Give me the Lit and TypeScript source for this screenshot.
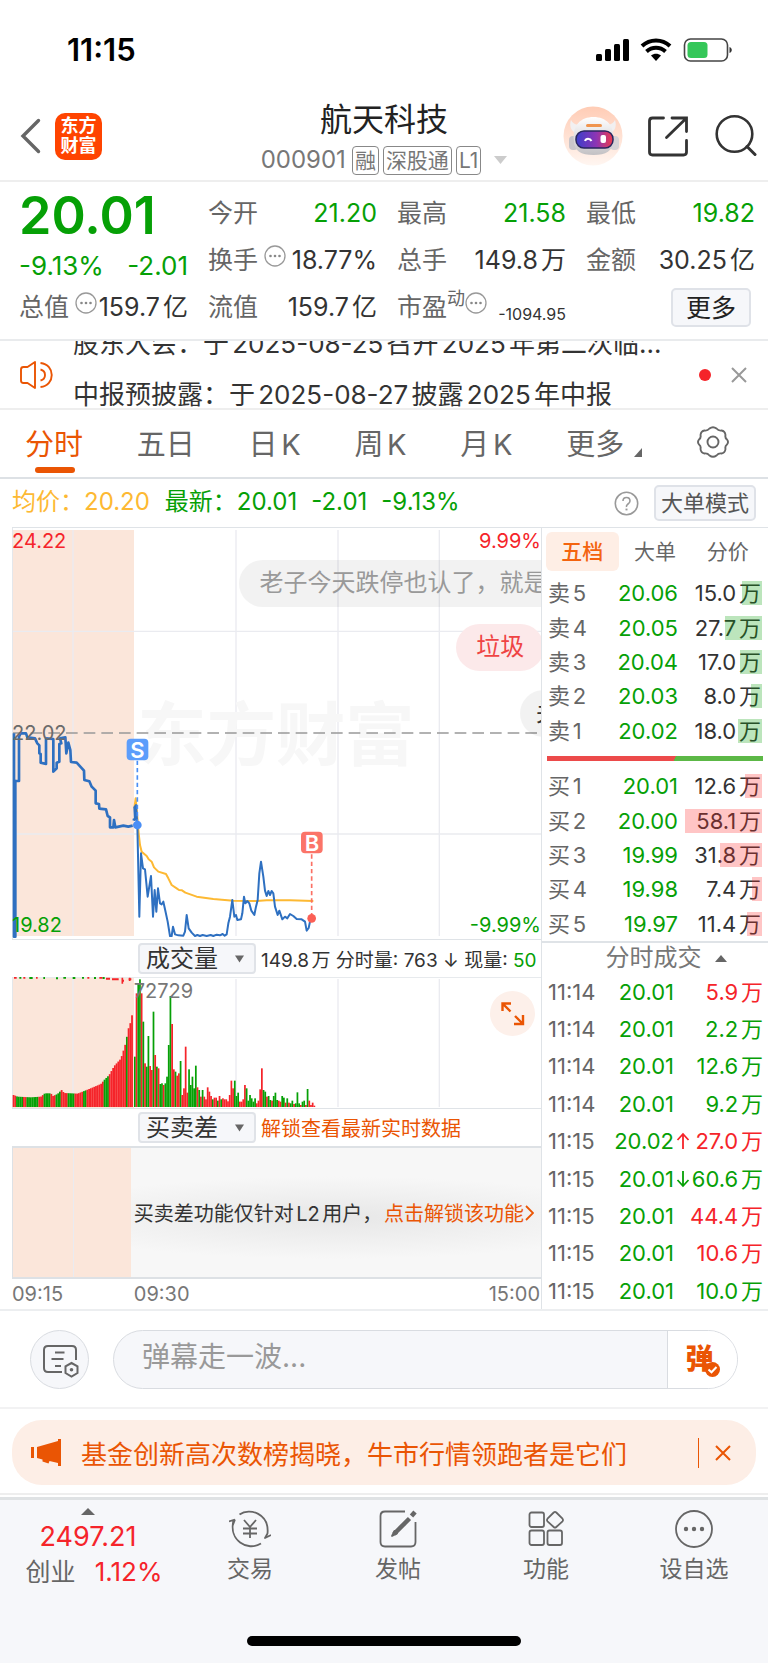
import { LitElement, html, svg, css, nothing } from "lit";
import { customElement } from "lit/decorators.js";
import { classMap } from "lit/directives/class-map.js";

type Tone = "up" | "down" | "plain";

const ASKS: [string, string, number][] = [
  ["卖5", "20.06", 15.0],
  ["卖4", "20.05", 27.7],
  ["卖3", "20.04", 17.0],
  ["卖2", "20.03", 8.0],
  ["卖1", "20.02", 18.0],
];
const BIDS: [string, string, number][] = [
  ["买1", "20.01", 12.6],
  ["买2", "20.00", 58.1],
  ["买3", "19.99", 31.8],
  ["买4", "19.98", 7.4],
  ["买5", "19.97", 11.4],
];
const DEPTH_MAX = 58.1;

const TRADES: { time: string; price: string; move?: Tone; qty: string; tone: Tone }[] = [
  { time: "11:14", price: "20.01", qty: "5.9", tone: "up" },
  { time: "11:14", price: "20.01", qty: "2.2", tone: "down" },
  { time: "11:14", price: "20.01", qty: "12.6", tone: "down" },
  { time: "11:14", price: "20.01", qty: "9.2", tone: "down" },
  { time: "11:15", price: "20.02", move: "up", qty: "27.0", tone: "up" },
  { time: "11:15", price: "20.01", move: "down", qty: "60.6", tone: "down" },
  { time: "11:15", price: "20.01", qty: "44.4", tone: "up" },
  { time: "11:15", price: "20.01", qty: "10.6", tone: "up" },
  { time: "11:15", price: "20.01", qty: "10.0", tone: "down" },
];

const AUCTION_LINE =
  "42,640 42,1250 46,1250 46,783 57,783 57,650 62,640 78,640 82,652 105,655 112,670 118,676 118,700 122,702 122,728 138,732 138,655 160,657 160,755 170,745 170,728 178,725 178,672 184,670 180,655 196,652 199,700 205,668 211,690 213,726 230,728 243,742 252,752 253,780 268,784 275,800 287,812 287,850 297,852 298,866 318,868 323,888 330,892 330,922 340,922 342,900 346,922 370,917 385,920 398,917";
const PRICE_LINE =
  "398,898 405,900 403,862 408,855 412,915 418,1190 423,1000 429,1045 435,1048 443,1130 453,1068 459,1190 464,1110 469,1175 474,1105 480,1150 485,1153 490,1145 496,1172 503,1205 510,1248 515,1248 519,1220 525,1243 535,1246 550,1247 555,1235 560,1185 566,1225 575,1238 585,1248 592,1245 600,1248 608,1245 620,1248 632,1245 640,1248 650,1244 660,1246 668,1242 674,1247 680,1243 685,1210 690,1190 697,1140 703,1190 708,1185 712,1200 723,1198 727,1180 732,1130 736,1150 742,1143 748,1150 754,1172 763,1185 768,1160 773,1140 778,1060 783,1025 790,1070 795,1112 800,1128 805,1113 810,1125 815,1113 820,1120 825,1160 833,1185 838,1172 847,1198 855,1190 862,1195 870,1182 880,1188 890,1197 905,1198 915,1205 920,1232 926,1224 930,1205 935,1195";
const AVERAGE_LINE =
  "403,865 407,835 411,880 416,940 420,975 425,995 440,1008 446,1018 455,1025 462,1042 475,1055 498,1062 505,1075 515,1095 530,1105 537,1110 546,1111 556,1118 590,1130 640,1137 700,1142 770,1143 800,1141 870,1141 940,1143";

const AUCTION_ENVELOPE: [number, number][] = [
  [38, 495], [50, 500], [90, 502], [120, 500], [132, 490], [150, 490], [156, 498], [170, 492], [182, 480],
  [190, 489], [230, 491], [260, 479], [300, 462], [310, 450], [325, 435], [340, 408], [360, 386], [372, 348],
  [378, 320], [384, 290], [390, 275], [397, 235],
];
const AUCTION_TONES = "rrggggrrgggggggrrrggggrrrgggrrrrggggrrrrrggrrrrrrrrrrgggrrrrrrrrrrgrrr";

const SESSION_BARS =
  "380g 190r 160g 148g 190r 275g 400r 410g 318g 408r 420r 245g 375r 410g 415r 462g 460g 465r 460g 440g 345g 198g 282r 418r 425g 437r 430r 393g 495r 475r 350r 488r 418g 465g 440g 475g 407g 472r 480g 500r 480g 500r 508r 472r 485r 498r 508g 503r 503r 512g 498r 508g 505r 508r 508r 514r 495r 452r 475r 452g 498g 488g 515r 515r 508r 465r 475g 512g 495g 505g 515g 505g 520r 512r 478r 415r 480g 485g 500r 498g 510g 512r 498g 488g 510g 512r 515r 498g 503g 518r 505g 518r 520g 512g 522r 520g 487g 520g 525r 515g 512g 525r 477g 512r 525r 518r 527r".split(" ");

const RED = "#f5242a";
const GREEN = "#06a006";

const envelopeAt = (x: number) => {
  for (let i = 1; i < AUCTION_ENVELOPE.length; i++) {
    const [x0, y0] = AUCTION_ENVELOPE[i - 1];
    const [x1, y1] = AUCTION_ENVELOPE[i];
    if (x <= x1) return y0 + ((y1 - y0) * (x - x0)) / (x1 - x0);
  }
  return 235;
};

const closeIcon = svg`<path d="M2 2L16 16M16 2L2 16" fill="none" stroke="currentColor" stroke-width="2" />`;

@customElement("quote-stats")
export class QuoteStats extends LitElement {
  static styles = css`
    :host {
      display: block;
      border-bottom: 2px solid #e9ebed;
      padding: 8px 13px 8px 19px;
      font-size: 25px;
      line-height: 47px;
    }
    .grid {
      display: grid;
      grid-template-columns: repeat(4, minmax(0, 1fr));
      column-gap: 20px;
    }
    .cell {
      display: flex;
      justify-content: space-between;
      white-space: nowrap;
      color: #333;
    }
    .label {
      display: flex;
      align-items: center;
      color: #666;
    }
    .down {
      color: #06a006;
    }
    .lead {
      grid-row: span 2;
      color: #06a006;
    }
    .price {
      font-size: 52px;
      font-weight: 600;
      line-height: 52px;
    }
    .change {
      display: flex;
      justify-content: space-between;
      font-size: 26px;
      line-height: 36px;
      padding-top: 6px;
    }
    .info {
      width: 22px;
      height: 22px;
      align-self: flex-start;
      margin: 8px 0 0 6px;
    }
    .tight {
      margin-left: 0;
    }
    .sup {
      font-size: 18px;
      line-height: 30px;
      align-self: flex-start;
    }
    .small {
      font-size: 16px;
      line-height: 34px;
      align-self: flex-end;
    }
    .more {
      justify-self: end;
      align-self: center;
      width: 80px;
      height: 39px;
      padding: 0;
      border: 2px solid #dfe2e8;
      border-radius: 5px;
      background: #f6f7fa;
      font: inherit;
      line-height: 34px;
      color: #222;
      margin-right: 4px;
    }
  `;

  private info(tight = false) {
    return html`<svg class=${classMap({ info: true, tight })} viewBox="0 0 22 22" aria-hidden="true">
      <circle cx="11" cy="11" r="10" fill="none" stroke="#999" stroke-width="1.3" />
      <circle cx="6.500" cy="11" r="1.3" fill="#888" />
      <circle cx="11" cy="11" r="1.3" fill="#888" />
      <circle cx="15.500" cy="11" r="1.3" fill="#888" />
    </svg>`;
  }

  render() {
    return html`<div class="grid">
      <div class="lead">
        <div class="price">20.01</div>
        <div class="change"><span>-9.13%</span><span>-2.01</span></div>
      </div>
      <div class="cell"><span class="label">今开</span><span class="down">21.20</span></div>
      <div class="cell"><span class="label">最高</span><span class="down">21.58</span></div>
      <div class="cell"><span class="label">最低</span><span class="down">19.82</span></div>
      <div class="cell"><span class="label">换手${this.info()}</span><span>18.77%</span></div>
      <div class="cell"><span class="label">总手</span><span>149.8万</span></div>
      <div class="cell"><span class="label">金额</span><span>30.25亿</span></div>
      <div class="cell"><span class="label">总值${this.info()}</span><span>159.7亿</span></div>
      <div class="cell"><span class="label">流值</span><span>159.7亿</span></div>
      <div class="cell">
        <span class="label">市盈<span class="sup">动</span>${this.info(true)}</span><span class="small">-1094.95</span>
      </div>
      <button class="more">更多</button>
    </div>`;
  }
}

@customElement("price-chart")
export class PriceChart extends LitElement {
  static styles = css`
    :host {
      display: block;
      position: relative;
      overflow: hidden;
      border-bottom: 1px solid #dfe3e7;
      font-size: 20px;
      line-height: 24px;
    }
    .plot {
      display: block;
      width: 100%;
    }
    .tag {
      position: absolute;
    }
    .top {
      top: 2px;
    }
    .mid {
      top: 50%;
      margin-top: -12px;
      color: #6b6b6b;
    }
    .low {
      bottom: 2px;
    }
    .left {
      left: 0;
    }
    .right {
      right: 0;
    }
    .up {
      color: #f5242a;
    }
    .down {
      color: #06a006;
    }
    .bullet {
      position: absolute;
      height: 47px;
      line-height: 46px;
      border-radius: 24px;
      padding: 0 20px;
      box-sizing: border-box;
      white-space: nowrap;
      font-size: 24px;
      color: #999;
      background: rgba(0, 0, 0, 0.05);
    }
    .first {
      left: 43%;
      top: 33px;
    }
    .second {
      left: 84%;
      top: 97px;
      color: #ef4444;
      background: #fce9ea;
    }
    .third {
      left: 96%;
      top: 163px;
      padding: 0 16px;
      color: #333;
    }
    .watermark {
      font: 700 65px "Noto Sans CJK SC", sans-serif;
    }
    .badge {
      font: 600 22px Inter, sans-serif;
    }
  `;

  render() {
    return html`<svg class="plot" viewBox="36 21 1587 1236" role="img" aria-label="分时走势">
        <rect x="39" y="30" width="363" height="1218" fill="#fbe6da" />
        <g stroke="#eaebf0" stroke-width="4">
          <path d="M219 30V1248M708 30V1248M1014 30V1248M1318 30V1248M39 334H1623M39 942H1623" />
        </g>
        <g transform="translate(412 720) scale(3.2)" fill="#f7f7f7"><text class="watermark" x="0" y="0">东方财富</text></g>
        <path d="M36 21H1623" stroke="#dfe3e7" stroke-width="6" />
        <path d="M37 21V1257" stroke="#dfe3e7" stroke-width="3" />
        <path d="M39 639H1623" stroke="#999" stroke-width="5" stroke-dasharray="35 18" />
        <g fill="none" stroke-linejoin="round">
          <polyline points=${AVERAGE_LINE} stroke="#fdb933" stroke-width="6" />
          <polyline points=${AUCTION_LINE} stroke="#2e70c1" stroke-width="8" />
          <polyline points=${PRICE_LINE} stroke="#2e70c1" stroke-width="6" />
          <path d="M412 722V905" stroke="#4a8ef5" stroke-width="5" stroke-dasharray="13 9" />
          <path d="M935 1003V1185" stroke="#fb7064" stroke-width="5" stroke-dasharray="13 9" />
        </g>
        <circle cx="412" cy="915" r="13" fill="#4a8ef5" />
        <circle cx="935" cy="1195" r="13" fill="#fb5f55" />
        <rect x="380" y="656" width="65" height="65" rx="12" fill="#5c9dfb" />
        <rect x="903" y="935" width="65" height="65" rx="12" fill="#fb7468" />
        <g fill="#fff" text-anchor="middle">
          <g transform="translate(412 713) scale(3)"><text class="badge" x="0" y="0">S</text></g>
          <g transform="translate(936 992) scale(3)"><text class="badge" x="0" y="0">B</text></g>
        </g>
      </svg>
      <span class="tag top left up">24.22</span>
      <span class="tag top right up">9.99%</span>
      <span class="tag mid left">22.02</span>
      <span class="tag low left down">19.82</span>
      <span class="tag low right down">-9.99%</span>
      <span class="bullet first">老子今天跌停也认了，就是</span>
      <span class="bullet second">垃圾</span>
      <span class="bullet third">关</span>`;
  }
}

@customElement("volume-chart")
export class VolumeChart extends LitElement {
  static styles = css`
    :host {
      display: block;
      position: relative;
      border-bottom: 1px solid #dfe3e7;
    }
    .plot {
      display: block;
      width: 100%;
    }
    .peak {
      position: absolute;
      left: 23%;
      top: 2px;
      font-size: 20px;
      line-height: 24px;
      color: #777;
    }
    .expand {
      position: absolute;
      right: 6px;
      top: 14px;
      width: 45px;
      height: 45px;
      padding: 0;
      border: 0;
      border-radius: 50%;
      background: #fdf0ea;
      color: #ea5504;
    }
    .glyph {
      display: block;
      width: 45px;
      height: 45px;
    }
  `;

  render() {
    const auction = [];
    for (let i = 0; i < 70; i++) {
      const x = 38 + i * 5.15;
      const y = envelopeAt(x);
      auction.push(svg`<rect x=${x} y=${y} width="5.4" height=${531 - y} fill=${AUCTION_TONES[i] === "g" ? GREEN : RED} />`);
    }
    const session = SESSION_BARS.map((bar, i) => {
      const y = parseInt(bar, 10);
      return svg`<rect x=${402 + i * 5.08} y=${y} width="5.2" height=${531 - y} fill=${bar.endsWith("g") ? GREEN : RED} />`;
    });
    return html`<svg class="plot" viewBox="36 141 1587 394" role="img" aria-label="成交量">
        <rect x="39" y="144" width="363" height="390" fill="#fbe6da" />
        <path d="M219 147V531M708 147V531M1014 147V531M1318 147V531" stroke="#eaebf0" stroke-width="4" />
        <path d="M36 141H1623" stroke="#dfe3e7" stroke-width="4" />
        <path d="M37 141V535" stroke="#dfe3e7" stroke-width="3" />
        <path d="M42 143h8M70 143h6M108 143h5M262 143h6M298 143h10M318 146h12M336 148h20M366 152h6M386 148h8" stroke=${RED} stroke-width="6" />
        <path d="M367 143v18M389 143v10" stroke=${RED} stroke-width="5" />
        <path d="M58 143h6M88 144h10M130 144h5M168 145h6M190 143h8M218 144h8M246 143h6M282 144h6M308 144h6" stroke=${GREEN} stroke-width="6" />
        <g>${auction}${session}</g>
      </svg>
      <span class="peak">72729</span>
      <button class="expand" aria-label="全屏">
        <svg class="glyph" viewBox="0 0 45 45">
          <path d="M12.500 20V12.500H21M13 13L20.500 20.500M33 24V33H24M32.500 32.500L25 25" fill="none" stroke="currentColor" stroke-width="2.400" />
        </svg>
      </button>`;
  }
}

@customElement("order-book")
export class OrderBook extends LitElement {
  static styles = css`
    :host {
      display: flex;
      flex-direction: column;
      min-width: 0;
      font-size: 22px;
      border-left: 1px solid #dfe3e7;
      border-top: 1px solid #dfe3e7;
    }
    .tabs {
      display: grid;
      grid-template-columns: repeat(3, 1fr);
      padding: 4px 4px 5px;
      font-size: 21px;
    }
    .tab {
      border: 0;
      padding: 0;
      background: none;
      font: inherit;
      color: #666;
      line-height: 39px;
      height: 39px;
      border-radius: 6px;
    }
    .active {
      background: #feeee5;
      color: #f4640f;
      font-weight: 500;
    }
    .book,
    .trades {
      width: 100%;
      table-layout: fixed;
      border-collapse: collapse;
      line-height: 24px;
    }
    .book {
      height: 172px;
    }
    .name {
      text-align: left;
      font-weight: 400;
      color: #666;
      padding: 0 0 0 6px;
      width: 64px;
    }
    .price {
      text-align: right;
      padding: 0;
      color: #06a006;
      width: 66px;
    }
    .qty {
      text-align: right;
      padding: 0 7px 0 0;
      color: #333;
      white-space: nowrap;
    }
    .depth {
      display: flex;
      justify-content: flex-end;
      position: relative;
    }
    .fill {
      position: absolute;
      right: -1px;
      top: 0;
      bottom: 0;
      max-width: 100%;
      opacity: 0.27;
      background: #06a006;
    }
    .bid {
      background: #ff2a2a;
    }
    .ratio {
      display: flex;
      height: 5px;
      margin: 8px 5px 8px;
      background: linear-gradient(115deg, #ec4a4a 59%, #5cb846 59%);
    }
    .heading {
      border: 0;
      border-top: 2px solid #dfe3e7;
      padding: 0 0 0 22px;
      background: none;
      font: inherit;
      font-size: 24px;
      line-height: 30px;
      color: #777;
      display: flex;
      justify-content: center;
      align-items: center;
      gap: 13px;
    }
    .caret {
      width: 12px;
      height: 7px;
    }
    .trades {
      flex: 1;
      display: grid;
      grid-auto-rows: 1fr;
    }
    .body {
      display: contents;
    }
    .row {
      display: grid;
      grid-template-columns: 66px 68px 14px 1fr;
      align-items: center;
    }
    .up {
      color: #f5242a;
    }
    .down {
      color: #06a006;
    }
    .move {
      padding: 0;
      display: flex;
    }
    .arrow {
      width: 14px;
      height: 18px;
    }
  `;

  private table(rows: [string, string, number][], bid: boolean) {
    return html`<table class="book" aria-label=${bid ? "买盘" : "卖盘"}>
      ${rows.map(
        ([name, price, qty]) => html`<tr>
          <th class="name" scope="row">${name}</th>
          <td class="price">${price}</td>
          <td class="qty">
            <span class="depth"
              ><span class=${classMap({ fill: true, bid })} style="width:${Math.round((qty / DEPTH_MAX) * 93)}%"></span
              ><span>${qty.toFixed(1)}万</span></span
            >
          </td>
        </tr>`,
      )}
    </table>`;
  }

  private arrow(move: Tone) {
    return html`<svg class="arrow ${move}" viewBox="0 0 14 18">
      <path d=${move === "up" ? "M7 17V2M1.500 8L7 2L12.500 8" : "M7 1V16M1.500 10L7 16L12.500 10"} fill="none" stroke="currentColor" stroke-width="1.800" />
    </svg>`;
  }

  render() {
    return html`<div class="tabs">
        <button class="tab active">五档</button><button class="tab">大单</button><button class="tab">分价</button>
      </div>
      ${this.table(ASKS, false)}
      <div class="ratio"></div>
      ${this.table(BIDS, true)}
      <button class="heading">
        分时成交<svg class="caret" viewBox="0 0 12 7"><path d="M0 7L6 0L12 7Z" fill="#666" /></svg>
      </button>
      <table class="trades" aria-label="分时成交">
        <tbody class="body">
          ${TRADES.map(
            (t) => html`<tr class="row">
              <td class="name">${t.time}</td>
              <td class="price">${t.price}</td>
              <td class="move">${t.move ? this.arrow(t.move) : nothing}</td>
              <td class="qty ${t.tone}">${t.qty}万</td>
            </tr>`,
          )}
        </tbody>
      </table>`;
  }
}

@customElement("app-root")
export class AppRoot extends LitElement {
  static styles = css`
    :host {
      display: block;
      background: #fff;
      color: #333;
      font-family: Inter, "Noto Sans CJK SC", sans-serif;
      text-autospace: normal;
    }
    .status {
      display: flex;
      justify-content: space-between;
      align-items: center;
      box-sizing: border-box;
      height: 92px;
      padding: 6px 35px 0 67px;
      color: #000;
    }
    .clock {
      font-size: 31px;
      font-weight: 600;
    }
    .device {
      width: 138px;
      height: 26px;
    }
    .header {
      display: grid;
      grid-template-columns: 1fr auto 1fr;
      align-items: center;
      height: 88px;
      border-bottom: 2px solid #eee;
      padding: 0 11px;
    }
    .start,
    .end {
      display: flex;
      align-items: center;
    }
    .start {
      gap: 14px;
      padding-left: 8px;
    }
    .end {
      justify-content: flex-end;
    }
    .plain {
      border: 0;
      padding: 0;
      background: none;
      color: inherit;
      display: block;
      font: inherit;
    }
    .back {
      display: block;
      width: 22px;
      height: 36px;
    }
    .logo {
      width: 47px;
      height: 47px;
      border-radius: 10px;
      background: #ff4400;
      color: #fff;
      font-size: 18px;
      font-weight: 700;
      line-height: 20px;
      text-align: center;
      padding: 3px 5px;
      box-sizing: border-box;
    }
    .title {
      text-align: center;
      margin: 0;
      padding-top: 2px;
      font-size: 32px;
      font-weight: 400;
      line-height: 46px;
      color: #222;
    }
    .sub {
      display: flex;
      align-items: center;
      gap: 4px;
      line-height: 34px;
      color: #777;
    }
    .code {
      font-size: 24px;
      padding-right: 2px;
    }
    .chip {
      border: 1px solid #888;
      border-radius: 4px;
      font-size: 21px;
      line-height: 27px;
      padding: 0 2px;
    }
    .drop {
      width: 13px;
      height: 8px;
      margin-left: 9px;
    }
    .robot {
      width: 60px;
      height: 60px;
      display: block;
    }
    .share,
    .search {
      width: 44px;
      height: 44px;
      display: block;
      margin-left: 23px;
    }
    .notice {
      display: grid;
      grid-template-columns: 54px 1fr auto auto;
      grid-template-rows: 100%;
      align-items: center;
      height: 67px;
      overflow: hidden;
      border-bottom: 2px solid #eee;
      padding: 0 20px 0 19px;
    }
    .speaker {
      width: 34px;
      height: 30px;
    }
    .ticker {
      font-size: 26px;
      line-height: 51px;
      white-space: nowrap;
      margin-top: -11px;
      min-width: 0;
    }
    .dot {
      width: 12px;
      height: 12px;
      border-radius: 50%;
      background: #f5242a;
      margin-right: 19px;
    }
    .close {
      width: 18px;
      height: 18px;
      display: block;
    }
    .muted {
      color: #999;
    }
    .tabs {
      display: flex;
      justify-content: space-between;
      align-items: stretch;
      height: 67px;
      padding: 0 38px 0 25px;
      border-bottom: 2px solid #dde1e5;
      font-size: 29px;
      color: #666;
    }
    .tab {
      border: 0;
      background: none;
      font: inherit;
      color: inherit;
      padding: 0 0 3px;
      display: flex;
      align-items: center;
      position: relative;
      white-space: nowrap;
    }
    .selected {
      color: #ea5504;
    }
    .selected::after {
      content: "";
      position: absolute;
      left: 10px;
      right: 8px;
      bottom: 4px;
      height: 6px;
      border-radius: 3px;
      background: #ea5504;
    }
    .corner {
      width: 8px;
      height: 9px;
      margin: 20px 0 0 10px;
    }
    .gear {
      width: 34px;
      height: 34px;
    }
    .summary {
      display: flex;
      align-items: center;
      height: 48px;
      padding: 0 12px;
      font-size: 24px;
      line-height: 44px;
      color: #06a006;
      white-space: nowrap;
    }
    .figures {
      flex: 1;
      padding-bottom: 2px;
    }
    .avg {
      color: #fdb933;
      margin-right: 12px;
    }
    .delta {
      margin-left: 14px;
    }
    .help {
      width: 25px;
      height: 25px;
      display: block;
      margin-right: 15px;
    }
    .mode {
      box-sizing: border-box;
      height: 36px;
      border: 2px solid #dfe2e8;
      border-radius: 5px;
      background: #f6f7fa;
      font: inherit;
      font-size: 22px;
      line-height: 30px;
      color: #555;
      padding: 0 5px;
    }
    .market {
      display: grid;
      grid-template-columns: minmax(0, 529fr) minmax(0, 227fr);
      padding-left: 12px;
      border-bottom: 2px solid #eceef0;
    }
    .charts {
      min-width: 0;
    }
    .bar {
      display: flex;
      align-items: center;
      height: 37px;
      padding-left: 126px;
      gap: 5px;
      font-size: 19px;
      white-space: nowrap;
      overflow: hidden;
    }
    .picker {
      appearance: none;
      box-sizing: border-box;
      width: 118px;
      height: 31px;
      flex: none;
      border: 2px solid #e0e3e8;
      border-radius: 4px;
      padding: 0 26px 0 6px;
      font: inherit;
      font-size: 24px;
      line-height: 27px;
      color: #333;
      background: #f6f7fa
        url("data:image/svg+xml,%3Csvg xmlns='http://www.w3.org/2000/svg' viewBox='0 0 10 8'%3E%3Cpath d='M0 0H10L5 8Z' fill='%23666'/%3E%3C/svg%3E")
        no-repeat right 10px center / 9px 8px;
    }
    .green {
      color: #06a006;
    }
    .unlock {
      font-size: 20px;
      color: #ea5504;
      text-decoration: none;
    }
    .locked {
      display: grid;
      grid-template-columns: 118fr 411fr;
      height: 129px;
      border-top: 2px solid #dde1e5;
      border-bottom: 2px solid #dde1e5;
      border-left: 1px solid #dde1e5;
    }
    .pre {
      background: linear-gradient(#eaebf0, #eaebf0) 60px 0 / 1px 100% no-repeat #fbe6da;
    }
    .gate {
      display: flex;
      align-items: center;
      justify-content: space-between;
      padding: 0 7px 0 3px;
      white-space: nowrap;
      font-size: 20px;
      background: radial-gradient(ellipse 75% 32% at 50% 54%, #e7e7e7, #f7f7f7);
    }
    .gatelink {
      display: flex;
      align-items: center;
      color: #ea5504;
      text-decoration: none;
    }
    .next {
      width: 9px;
      height: 16px;
      margin-left: 1px;
    }
    .axis {
      display: grid;
      grid-template-columns: 122fr 203fr 204fr;
      font-size: 20px;
      line-height: 30px;
      color: #777;
      padding-right: 1px;
    }
    .last {
      text-align: right;
    }
    .chat {
      display: flex;
      gap: 24px;
      padding: 19px 30px 18px;
      border-bottom: 2px solid #f2f2f3;
    }
    .round {
      width: 59px;
      height: 59px;
      box-sizing: border-box;
      flex: none;
      border: 1px solid #d9dce1;
      border-radius: 50%;
      background: #f6f7fa;
      padding: 0;
      color: #666;
    }
    .note {
      width: 57px;
      height: 57px;
      display: block;
    }
    .field {
      flex: 1;
      min-width: 0;
      display: flex;
      height: 59px;
      box-sizing: border-box;
      border: 1px solid #d9dce1;
      border-radius: 30px;
      overflow: hidden;
      background: #f6f7fa;
    }
    .entry {
      flex: 1;
      min-width: 0;
      border: 0;
      outline: 0;
      background: none;
      font: inherit;
      font-size: 28px;
      color: #333;
      padding: 0 28px 5px;
    }
    .entry::placeholder {
      color: #999;
      opacity: 1;
    }
    .toggle {
      position: relative;
      width: 70px;
      border: 0;
      border-left: 1px solid #d9dce1;
      background: #fff;
      color: #ea5504;
      font: inherit;
      font-size: 28px;
      font-weight: 900;
      line-height: 40px;
      padding: 0 6px 2px 0;
    }
    .tick {
      position: absolute;
      right: 17px;
      bottom: 11px;
      width: 15px;
      height: 15px;
    }
    .promo {
      display: flex;
      align-items: center;
      height: 65px;
      margin: 11px 12px 12px;
      padding: 0 24px 0 19px;
      box-sizing: border-box;
      border-radius: 30px;
      background: #fdeee6;
      color: #ea5504;
    }
    .horn {
      width: 31px;
      height: 27px;
      margin-right: 19px;
    }
    .headline {
      flex: 1;
      font-size: 26px;
      color: inherit;
      text-decoration: none;
      white-space: nowrap;
    }
    .rule {
      width: 1px;
      height: 30px;
      background: #ea5504;
      margin-right: 15px;
    }
    .footer {
      background: #f6f7fa;
      border-top: 3px solid #dfe2e4;
      box-shadow: 0 -2px #fff, 0 -4px #eee;
      padding-bottom: 17px;
    }
    .nav {
      display: grid;
      grid-template-columns: 176fr 148fr 148fr 148fr 148fr;
      height: 136px;
      align-items: start;
    }
    .item {
      display: flex;
      flex-direction: column;
      align-items: center;
      text-decoration: none;
      color: #666;
      font-size: 23px;
      line-height: 34px;
      padding-top: 9px;
      gap: 3px;
    }
    .icon {
      width: 42px;
      height: 40px;
    }
    .index {
      display: flex;
      flex-direction: column;
      align-items: center;
      line-height: 35px;
      font-size: 26px;
      color: #f5242a;
      padding-top: 8px;
      white-space: nowrap;
    }
    .tip {
      width: 14px;
      height: 7px;
      margin-bottom: 4px;
    }
    .points {
      font-size: 27px;
    }
    .today {
      padding-left: 12px;
    }
    .board {
      font-size: 25px;
      color: #666;
      margin-right: 16px;
    }
    .home {
      width: 274px;
      height: 10px;
      margin: 0 auto;
      border-radius: 5px;
      background: #000;
    }
  `;

  private header() {
    return html`<div class="status">
        <span class="clock">11:15</span>
        <svg class="device" viewBox="0 0 138 26" aria-label="信号与电量">
          <rect x="1" y="18" width="6" height="7" rx="1.500" />
          <rect x="10" y="13" width="6" height="12" rx="1.500" />
          <rect x="19" y="8" width="6" height="17" rx="1.500" />
          <rect x="28" y="3" width="6" height="22" rx="1.500" />
          <g fill="none" stroke="#000" stroke-width="4">
            <path d="M47 10C55 2.500 67 2.500 75 10" />
            <path d="M51.500 15.500C57 10.500 65 10.500 70.500 15.500" />
          </g>
          <path d="M56 19.500C59 17 63 17 66 19.500L61 25Z" />
          <rect x="89.500" y="3" width="43" height="22" rx="6" fill="none" stroke="#444" stroke-width="1.600" />
          <rect x="92.500" y="6" width="20" height="16" rx="3.500" fill="#35c759" />
          <path d="M134.500 11C137.500 12 137.500 16 134.500 17Z" fill="#333" />
        </svg>
      </div>
      <header class="header">
        <div class="start">
          <button class="plain" aria-label="返回">
            <svg class="back" viewBox="0 0 22 36"><path d="M19.500 2.500L4 18L19.500 33.500" fill="none" stroke="#666" stroke-width="3.400" stroke-linecap="round" /></svg>
          </button>
          <div class="logo">东方财富</div>
        </div>
        <div>
          <h1 class="title">航天科技</h1>
          <div class="sub">
            <span class="code">000901</span><span class="chip">融</span><span class="chip">深股通</span><span class="chip">L1</span>
            <svg class="drop" viewBox="0 0 13 8"><path d="M0 0H13L6.500 8Z" fill="#ccc" /></svg>
          </div>
        </div>
        <div class="end">
          <button class="plain" aria-label="智能助手">
            <svg class="robot" viewBox="0 0 60 60">
              <defs>
                <linearGradient id="halo" x2="0" y2="1"><stop stop-color="#ffccb5" /><stop offset="1" stop-color="#fff6f1" /></linearGradient>
                <linearGradient id="visor"><stop stop-color="#3c3ecb" /><stop offset=".55" stop-color="#8d35b4" /><stop offset="1" stop-color="#ee3a4c" /></linearGradient>
                <linearGradient id="shell" x2="0" y2="1"><stop stop-color="#fff" /><stop offset="1" stop-color="#c3c1c4" /></linearGradient>
              </defs>
              <circle cx="30" cy="30" r="29.500" fill="url(#halo)" />
              <path d="M8 14C6 20 8 26 14 27L20 18C14 20 10 18 8 14ZM52 14C54 20 52 26 46 27L40 18C46 20 50 18 52 14Z" fill="#f2f0f1" />
              <rect x="6" y="30" width="9" height="14" rx="4" fill="#c9c6ca" />
              <rect x="47" y="30" width="9" height="14" rx="4" fill="#d6d3d6" />
              <path d="M11 35C9 19 18 11 30.500 11S52 19 50 35C50 45 43 49 30.500 49S11 45 11 35Z" fill="url(#shell)" />
              <rect x="13" y="25" width="37" height="17" rx="8" fill="url(#visor)" stroke="#29265e" stroke-width="1.500" />
              <rect x="23" y="18" width="16" height="3" rx="1.500" fill="#f0954f" />
              <path d="M22 35C23 32 27 32 28.500 35" fill="none" stroke="#fff" stroke-width="2" />
              <rect x="37.500" y="29" width="5.500" height="8" rx="2" fill="#fff" />
            </svg>
          </button>
          <button class="plain" aria-label="分享">
            <svg class="share" viewBox="0 0 44 44"><path d="M17.500 4H6.500Q3.500 4 3.500 7V38Q3.500 41 6.500 41H37.500Q40.500 41 40.500 38V26.500M26 4H40.500V17.500M40 4.500L20.500 23.500" fill="none" stroke="#333" stroke-width="2.800" stroke-linecap="round" /></svg>
          </button>
          <button class="plain" aria-label="搜索">
            <svg class="search" viewBox="0 0 44 44"><circle cx="21.500" cy="20" r="17.800" fill="none" stroke="#333" stroke-width="2.600" /><path d="M34 32.500L42 40.500" stroke="#333" stroke-width="3" stroke-linecap="round" /></svg>
          </button>
        </div>
      </header>`;
  }

  private notice() {
    return html`<section class="notice">
      <svg class="speaker" viewBox="0 0 34 30" fill="none" stroke="#ea5504" stroke-width="1.900" stroke-linejoin="round">
        <path d="M16 2L8.500 7H4.500Q2 7 2 9.500V20.500Q2 23 4.500 23H8.500L16 28Z" />
        <path d="M21.500 9.500C27.500 11 27.500 19 21.500 20.500M21.500 3C36.500 4.500 36.500 25.500 21.500 27" />
      </svg>
      <div class="ticker">
        <div>股东大会：于2025-08-25召开2025年第二次临...</div>
        <div>中报预披露：于2025-08-27披露2025年中报</div>
      </div>
      <span class="dot"></span>
      <button class="plain muted" aria-label="关闭公告"><svg class="close" viewBox="0 0 18 18">${closeIcon}</svg></button>
    </section>`;
  }

  private tabs() {
    return html`<nav class="tabs">
        <button class="tab selected">分时</button>
        <button class="tab">五日</button>
        <button class="tab">日K</button>
        <button class="tab">周K</button>
        <button class="tab">月K</button>
        <button class="tab">更多<svg class="corner" viewBox="0 0 8 9"><path d="M8 0V9H0Z" fill="#666" /></svg></button>
        <button class="tab" aria-label="设置">
          <svg class="gear" viewBox="0 0 34 34" fill="none" stroke="#666" stroke-width="1.900" stroke-linejoin="round">
            <path d="M13.500 3.500Q17 .8 20.500 3.500Q22.500 6 25.500 5.500Q29 6 29.500 10Q28.800 13 31 14.500Q33 17 31 19.500Q28.800 21 29.500 24Q29 28 25.500 28.500Q22.500 28 20.500 30.500Q17 33.200 13.500 30.500Q11.500 28 8.500 28.500Q5 28 4.500 24Q5.200 21 3 19.500Q1 17 3 14.500Q5.200 13 4.500 10Q5 6 8.500 5.500Q11.500 6 13.500 3.500Z" />
            <circle cx="17" cy="17" r="5.500" />
          </svg>
        </button>
      </nav>
      <div class="summary">
        <div class="figures">
          <span class="avg">均价：20.20</span><span>最新：20.01</span><span class="delta">-2.01</span><span class="delta">-9.13%</span>
        </div>
        <button class="plain" aria-label="帮助">
          <svg class="help" viewBox="0 0 25 25" fill="none" stroke="#999" stroke-width="1.600">
            <circle cx="12.500" cy="12.500" r="11.200" />
            <path d="M9 10Q9 6.500 12.500 6.500T16 10Q16 11.500 14 13T12.500 16" /><path d="M12.500 17.600V19.400" stroke-width="2" />
          </svg>
        </button>
        <button class="mode">大单模式</button>
      </div>`;
  }

  private market() {
    return html`<main class="market">
      <div class="charts">
        <price-chart></price-chart>
        <div class="bar">
          <select class="picker" aria-label="指标一"><option>成交量</option></select>
          <span>149.8万 分时量: 763 ↓ 现量: <span class="green">50</span></span>
        </div>
        <volume-chart></volume-chart>
        <div class="bar">
          <select class="picker" aria-label="指标二"><option>买卖差</option></select>
          <a class="unlock" href="#unlock">解锁查看最新实时数据</a>
        </div>
        <div class="locked">
          <div class="pre"></div>
          <div class="gate">
            <span>买卖差功能仅针对L2用户，</span>
            <a class="gatelink" href="#level2"
              >点击解锁该功能<svg class="next" viewBox="0 0 9 16"><path d="M1 1L8 8L1 15" fill="none" stroke="currentColor" stroke-width="1.800" /></svg
            ></a>
          </div>
        </div>
        <div class="axis"><span>09:15</span><span>09:30</span><span class="last">15:00</span></div>
      </div>
      <order-book></order-book>
    </main>`;
  }

  private composer() {
    return html`<form class="chat">
        <button class="round" type="button" aria-label="弹幕设置">
          <svg class="note" viewBox="0 0 57 57" fill="none" stroke="currentColor" stroke-width="2">
            <path d="M31 41H17Q13 41 13 37V19Q13 15 17 15H41Q45 15 45 19V29" />
            <path d="M24 21.500H33.500M20.500 28H32.500M24 35H30" stroke-width="1.900" />
            <path d="M40.500 32L46.500 35.300V42L40.500 45.500L34.500 42V35.300Z" />
            <circle cx="40.500" cy="38.700" r="1.800" fill="currentColor" stroke="none" />
          </svg>
        </button>
        <div class="field">
          <input class="entry" type="text" placeholder="弹幕走一波..." aria-label="弹幕" />
          <button class="toggle" type="button">
            弹<svg class="tick" viewBox="0 0 15 15"><circle cx="7.500" cy="7.500" r="7.500" fill="#ea5504" /><path d="M3.500 7.500L6.500 10.300L11.500 5" fill="none" stroke="#fff" stroke-width="2" /></svg>
          </button>
        </div>
      </form>
      <aside class="promo">
        <svg class="horn" viewBox="0 0 31 27" fill="currentColor">
          <path d="M0 8H3V19H0ZM6 8L27 2V0H30V27H27V24L18.500 22L17.500 24.500L11.500 22.500V20.500L6 19Z" />
        </svg>
        <a class="headline" href="#funds">基金创新高次数榜揭晓，牛市行情领跑者是它们</a>
        <span class="rule"></span>
        <button class="plain" aria-label="关闭"><svg class="close" viewBox="0 0 18 18">${closeIcon}</svg></button>
      </aside>`;
  }

  private item(label: string, shape: unknown) {
    return html`<a class="item" href="#nav">
      <svg class="icon" viewBox="0 0 42 40" fill="none" stroke="#666" stroke-width="1.800" stroke-linejoin="round">${shape}</svg>
      <span>${label}</span>
    </a>`;
  }

  private footer() {
    return html`<footer class="footer">
      <nav class="nav">
        <div class="index">
          <svg class="tip" viewBox="0 0 14 7"><path d="M0 7L7 0L14 7Z" fill="#666" /></svg>
          <span class="points">2497.21</span>
          <span class="today"><span class="board">创业</span>1.12%</span>
        </div>
        ${this.item(
          "交易",
          svg`<path d="M10.500 5.500C21 -2 40.500 5 38.500 24.500L36 29L42 26M32 34.500C18 43 -.5 31 4.500 11.500M6 10.500L0 12.500M6 10.500L3.500 17" /><path d="M15 11L21 18L27 11M21 18V29M14 19.500H28M14 24.500H28" />`,
        )}
        ${this.item(
          "发帖",
          svg`<path d="M28 2.500H8Q3.500 2.500 3.500 7V33Q3.500 37.500 8 37.500H34Q38.500 37.500 38.500 33V13" /><path d="M17 25L32.500 9.500" stroke-width="4.500" /><path d="M17.500 22L15 27L20 24.500Z" fill="#666" /><path d="M34.500 7L38 3" stroke-width="4.500" />`,
        )}
        ${this.item(
          "功能",
          svg`<rect x="4.500" y="3.500" width="14.500" height="14.500" rx="2" /><rect x="4.500" y="21.500" width="14.500" height="14.500" rx="2" /><rect x="22.500" y="21.500" width="14.500" height="14.500" rx="2" /><path d="M28.700 3.500Q30 2.300 31.300 3.500L37.500 9.700Q38.500 11 37.500 12.300L31.300 18Q30 19.200 28.700 18L22.500 12.300Q21.500 11 22.500 9.700Z" />`,
        )}
        ${this.item(
          "设自选",
          svg`<circle cx="21" cy="20" r="18" /><g fill="#666" stroke="none"><circle cx="13" cy="20" r="2.200" /><circle cx="21" cy="20" r="2.200" /><circle cx="29" cy="20" r="2.200" /></g>`,
        )}
      </nav>
      <div class="home"></div>
    </footer>`;
  }

  render() {
    return html`${this.header()}<quote-stats></quote-stats>${this.notice()}${this.tabs()}${this.market()}${this.composer()}${this.footer()}`;
  }
}
